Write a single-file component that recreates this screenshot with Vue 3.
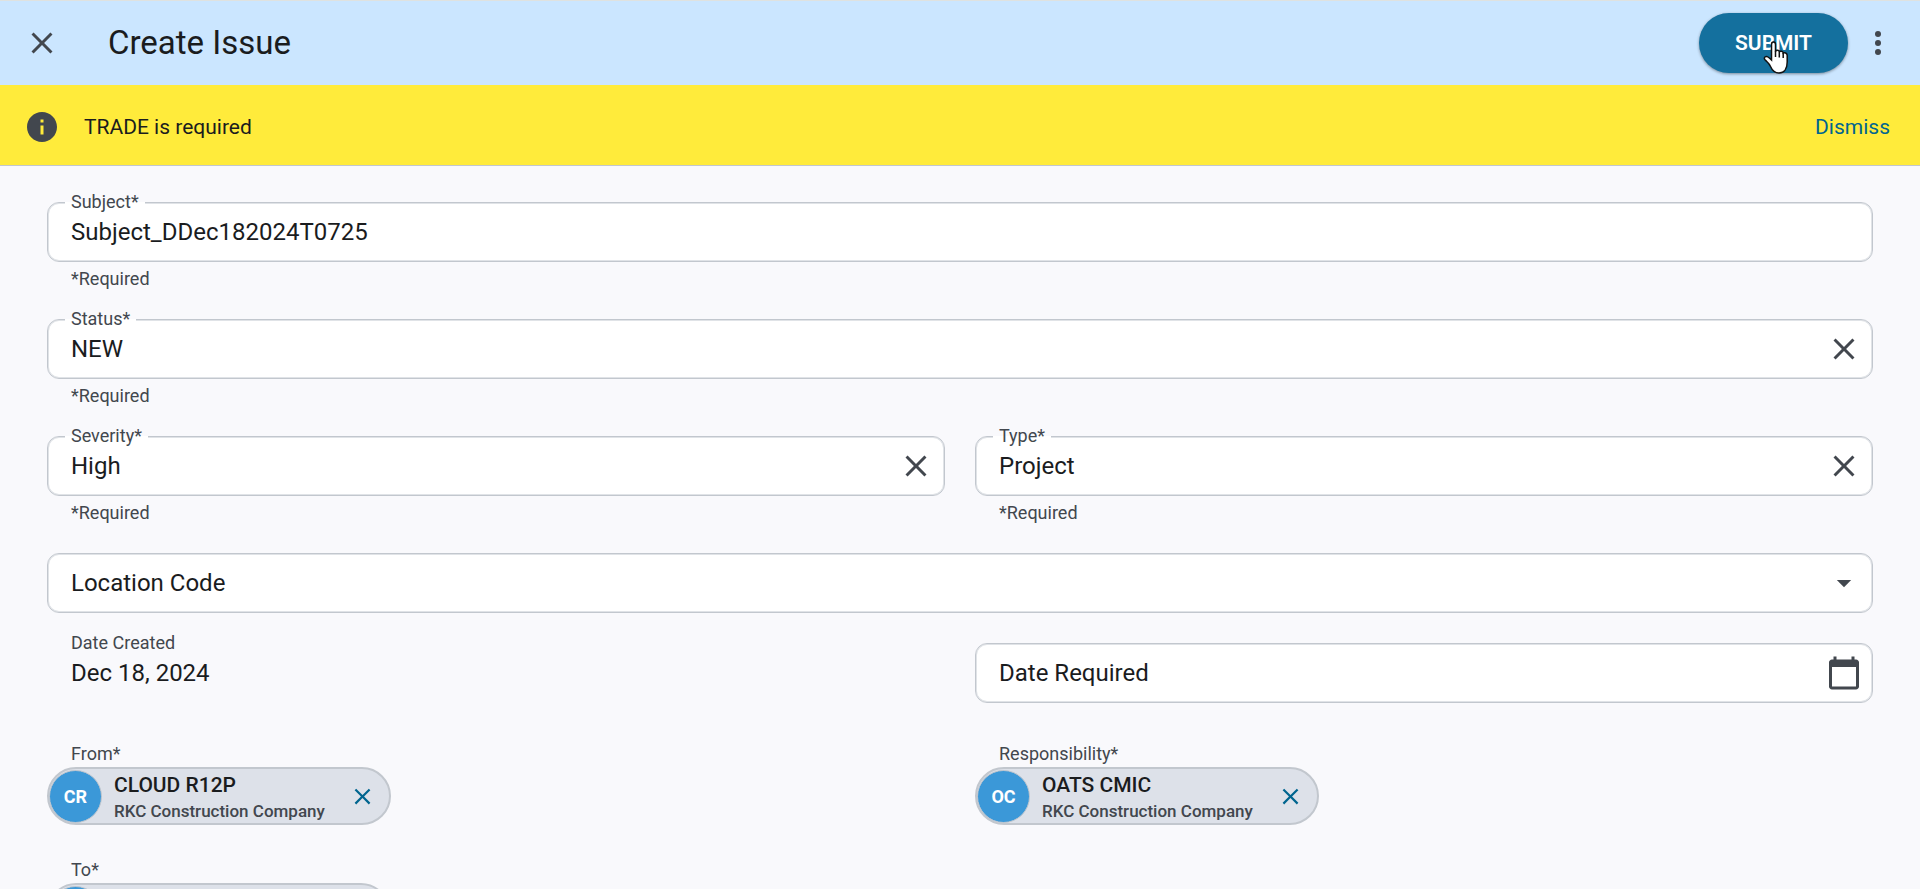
<script setup>
import { ref } from 'vue'

const subject = ref('Subject_DDec182024T0725')
const status = ref('NEW')
const severity = ref('High')
const type = ref('Project')
const location = ref('')
const dateRequired = ref('')
const showBanner = ref(true)

const people = [
  { label: 'From*', initials: 'CR', name: 'CLOUD R12P', company: 'RKC Construction Company' },
  { label: 'Responsibility*', initials: 'OC', name: 'OATS CMIC', company: 'RKC Construction Company' },
  { label: 'To*', initials: '', name: '', company: '' },
]
</script>

<template>
  <div class="page">
    <header class="topbar">
      <button class="icon-btn" type="button" aria-label="Close">
        <svg width="36" height="36" viewBox="0 0 24 24"><path d="M6.4 19L5 17.6l5.6-5.6L5 6.4 6.4 5l5.6 5.6L17.6 5 19 6.4 13.4 12l5.6 5.6-1.4 1.4-5.6-5.6z" /></svg>
      </button>
      <h1>Create Issue</h1>
      <button class="submit" type="submit" form="issue">
        SUBMIT
        <svg class="pointer" width="26" height="34" viewBox="0 0 26 34">
          <path d="M8.5 3.5C8.500 0.300 12.500 0.300 12.500 3.500V10.500C13 8.700 16.300 9 16.300 11C17 9.700 20 10 20.200 12C21.500 11.300 24.200 12 24.200 14.500V21C24.200 28 21 32 16 32C11 32 9 29 7.500 25.500C6 22 4.500 21.500 2 18.800C0 16.500 3 14.500 5 16C6.500 17 7.500 18 8.500 19Z" />
          <path class="lines" d="M12.500 10V16M16.300 11V16.500M20.200 12V17" />
        </svg>
      </button>
      <button class="icon-btn more" type="button" aria-label="More options">
        <svg width="36" height="36" viewBox="0 0 24 24"><circle cx="12" cy="6" r="2" /><circle cx="12" cy="12" r="2" /><circle cx="12" cy="18" r="2" /></svg>
      </button>
    </header>

    <div v-if="showBanner" class="banner" role="alert">
      <svg width="36" height="36" viewBox="0 0 24 24"><path d="M12 2C6.480 2 2 6.480 2 12s4.480 10 10 10 10-4.480 10-10S17.520 2 12 2zm1 15h-2v-6h2v6zm0-8h-2V7h2v2z" /></svg>
      <span class="message">TRADE is required</span>
      <button class="dismiss" type="button" @click="showBanner = false">Dismiss</button>
    </div>

    <form id="issue" class="form" @submit.prevent>
      <div class="field wide">
        <div class="box">
          <label for="subject">Subject*</label>
          <input id="subject" v-model="subject" type="text" />
        </div>
        <p class="hint">*Required</p>
      </div>

      <div class="field wide">
        <div class="box">
          <label for="status">Status*</label>
          <input id="status" v-model="status" type="text" />
          <button class="icon-btn" type="button" aria-label="Clear status" @click="status = ''">
            <svg width="36" height="36" viewBox="0 0 24 24"><path d="M6.4 19L5 17.6l5.6-5.6L5 6.4 6.4 5l5.6 5.6L17.6 5 19 6.4 13.4 12l5.6 5.6-1.4 1.4-5.6-5.6z" /></svg>
          </button>
        </div>
        <p class="hint">*Required</p>
      </div>

      <div class="field">
        <div class="box">
          <label for="severity">Severity*</label>
          <input id="severity" v-model="severity" type="text" />
          <button class="icon-btn" type="button" aria-label="Clear severity" @click="severity = ''">
            <svg width="36" height="36" viewBox="0 0 24 24"><path d="M6.4 19L5 17.6l5.6-5.6L5 6.4 6.4 5l5.6 5.6L17.6 5 19 6.4 13.4 12l5.6 5.6-1.4 1.4-5.6-5.6z" /></svg>
          </button>
        </div>
        <p class="hint">*Required</p>
      </div>

      <div class="field">
        <div class="box">
          <label for="type">Type*</label>
          <input id="type" v-model="type" type="text" />
          <button class="icon-btn" type="button" aria-label="Clear type" @click="type = ''">
            <svg width="36" height="36" viewBox="0 0 24 24"><path d="M6.4 19L5 17.6l5.6-5.6L5 6.4 6.4 5l5.6 5.6L17.6 5 19 6.4 13.4 12l5.6 5.6-1.4 1.4-5.6-5.6z" /></svg>
          </button>
        </div>
        <p class="hint">*Required</p>
      </div>

      <div class="field wide location">
        <div class="box">
          <select v-model="location" aria-label="Location Code">
            <option value="">Location Code</option>
          </select>
          <svg class="arrow" width="36" height="36" viewBox="0 0 24 24"><path d="M7.200 10h9.600l-4.800 4.800z" /></svg>
        </div>
      </div>

      <div class="readout">
        <span class="caption">Date Created</span>
        <span class="value">Dec 18, 2024</span>
      </div>

      <div class="field">
        <div class="box">
          <input v-model="dateRequired" type="text" placeholder="Date Required" aria-label="Date Required" />
          <button class="icon-btn" type="button" aria-label="Open calendar">
            <svg width="36" height="36" viewBox="0 0 24 24"><path d="M20 3h-1V1h-2v2H7V1H5v2H4c-1.100 0-2 .9-2 2v16c0 1.100.9 2 2 2h16c1.100 0 2-.9 2-2V5c0-1.100-.9-2-2-2zm0 18H4V8h16v13z" /></svg>
          </button>
        </div>
      </div>

      <div v-for="person in people" :key="person.label" class="person">
        <span class="caption">{{ person.label }}</span>
        <div class="chip">
          <span class="avatar">{{ person.initials }}</span>
          <span class="who">
            <span class="name">{{ person.name }}</span>
            <span class="company">{{ person.company }}</span>
          </span>
          <button class="remove" type="button" :aria-label="'Remove ' + person.name">
            <svg width="27" height="27" viewBox="0 0 24 24"><path d="M6.4 19L5 17.6l5.6-5.6L5 6.4 6.4 5l5.6 5.6L17.6 5 19 6.4 13.4 12l5.6 5.6-1.4 1.4-5.6-5.6z" /></svg>
          </button>
        </div>
      </div>
    </form>
  </div>
</template>

<style>
body {
  margin: 0;
}
</style>

<style scoped>
.page {
  height: 100vh;
  display: flex;
  flex-direction: column;
  overflow: hidden;
  background: #f9f9fc;
  color: #1a1c1e;
  font-family: Roboto, sans-serif;
}

button,
input,
select {
  font: inherit;
  color: inherit;
  border: 0;
  padding: 0;
  background: none;
}

button {
  cursor: pointer;
}

svg {
  display: block;
  fill: #42474e;
  flex: none;
}

.icon-btn {
  width: 36px;
  height: 36px;
  flex: none;
}

.topbar {
  flex: none;
  display: flex;
  align-items: center;
  height: 84px;
  padding: 0 24px;
  border-top: 1px solid #dfe2e0;
  background: #cbe6ff;
}

h1 {
  flex: 1;
  margin: 0 0 0 48px;
  font-size: 33px;
  font-weight: 400;
  line-height: 42px;
}

.submit {
  position: relative;
  height: 60px;
  padding: 0 36px;
  border-radius: 30px;
  background: #14709e;
  color: #fff;
  font-size: 21px;
  font-weight: 600;
  box-shadow: 0 1px 3px rgba(0, 0, 0, 0.4);
}

.pointer {
  position: absolute;
  left: 64px;
  top: 28px;
  fill: #fff;
  stroke: #111;
  stroke-width: 1.5;
}

.lines {
  fill: none;
}

.more {
  margin: 0 0 0 12px;
}

.banner {
  flex: none;
  display: flex;
  align-items: center;
  box-sizing: border-box;
  height: 81px;
  padding: 4px 30px 0 24px;
  border-bottom: 1px solid #c2c7ce;
  background: #ffeb3b;
  font-size: 21px;
}

.message {
  flex: 1;
  margin-left: 24px;
}

.dismiss {
  color: #00658f;
}

.form {
  flex: 1;
  min-height: 0;
  overflow: hidden;
  display: grid;
  grid-template-columns: 1fr 1fr;
  column-gap: 30px;
  align-content: start;
  padding: 36px 47px 0;
}

.wide {
  grid-column: 1 / -1;
}

.field {
  height: 117px;
}

.location {
  height: 90px;
}

.box {
  position: relative;
  display: flex;
  align-items: center;
  box-sizing: border-box;
  height: 60px;
  padding-right: 10px;
  border: 1px solid #c2c7ce;
  border-radius: 12px;
  background: #fff;
  box-shadow: inset 0 0 0 1px #e0e3e7;
}

.box label {
  position: absolute;
  left: 17px;
  top: -13px;
  padding: 0 6px;
  font-size: 18px;
  line-height: 24px;
  color: #42474e;
  background: linear-gradient(#f9f9fc 50%, #fff 50%);
}

.box input,
.box select {
  flex: 1;
  min-width: 0;
  height: 58px;
  padding-left: 23px;
  font-size: 24px;
  outline: none;
  appearance: none;
}

.box input::placeholder {
  color: #1a1c1e;
  opacity: 1;
}

.arrow {
  margin-left: -36px;
  pointer-events: none;
}

.hint {
  margin: 5px 24px 0;
  font-size: 18px;
  line-height: 24px;
  color: #42474e;
}

.caption {
  padding-left: 24px;
  font-size: 18px;
  line-height: 24px;
  color: #42474e;
}

.readout {
  display: flex;
  flex-direction: column;
  margin-top: -12px;
}

.value {
  padding-left: 24px;
  font-size: 24px;
  line-height: 36px;
}

.person {
  display: flex;
  flex-direction: column;
  align-items: flex-start;
  height: 116px;
  margin-top: -18px;
  margin-bottom: 18px;
}

.chip {
  display: flex;
  align-items: center;
  box-sizing: border-box;
  min-width: 343px;
  height: 58px;
  margin-top: 1px;
  padding-right: 13px;
  border: 2px solid #c2c7ce;
  border-radius: 29px;
  background: #dde1e9;
}

.avatar {
  display: grid;
  place-items: center;
  width: 51px;
  height: 51px;
  border: 1px solid #c2c7ce;
  border-radius: 50%;
  background: #3b98d8;
  color: #fff;
  font-size: 18px;
  font-weight: 700;
}

.who {
  flex: 1;
  display: flex;
  flex-direction: column;
  margin: 0 24px 0 12px;
  padding-top: 2px;
  font-weight: 500;
}

.name {
  font-size: 21px;
  line-height: 28px;
}

.company {
  font-size: 17px;
  line-height: 24px;
  color: #42474e;
}

.remove svg {
  fill: #00658f;
}
</style>
